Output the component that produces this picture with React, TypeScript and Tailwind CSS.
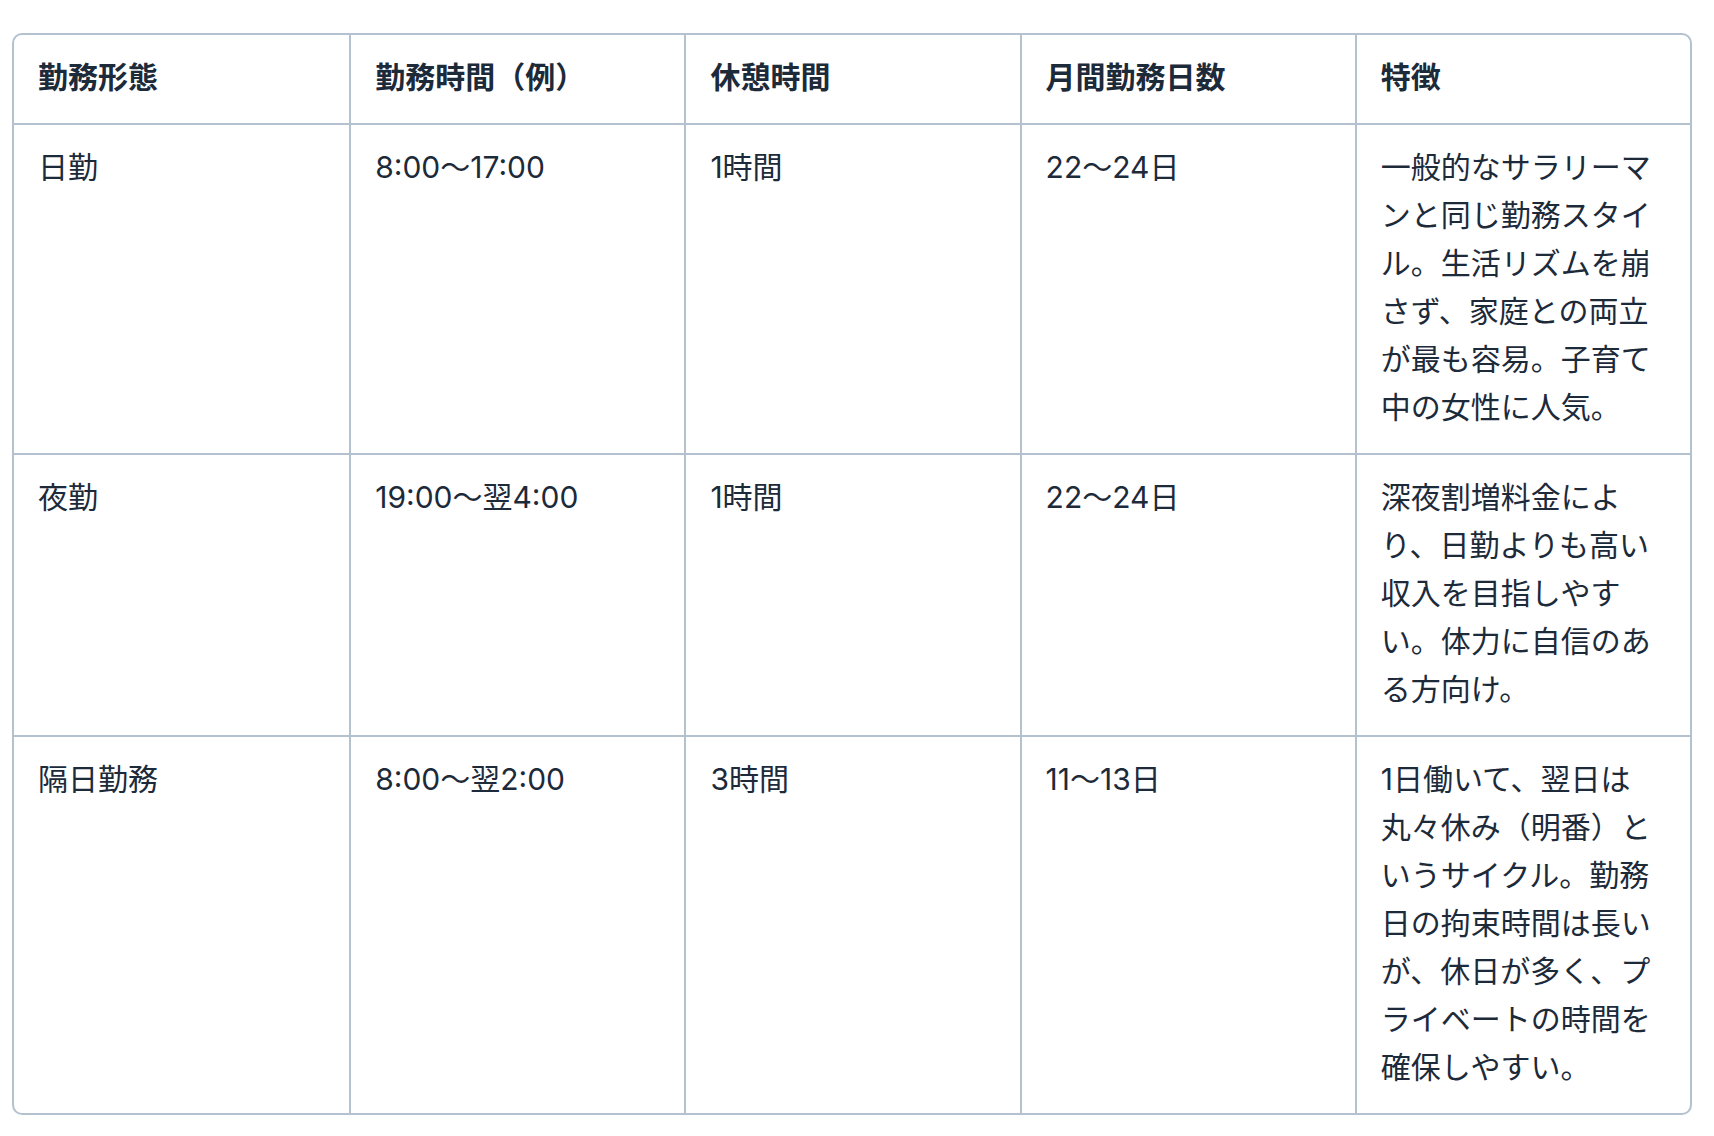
import React from "react";

const headers = ["勤務形態", "勤務時間（例）", "休憩時間", "月間勤務日数", "特徴"];

const rows: string[][] = [
  [
    "日勤",
    "8:00〜17:00",
    "1時間",
    "22〜24日",
    "一般的なサラリーマンと同じ勤務スタイル。生活リズムを崩さず、家庭との両立が最も容易。子育て中の女性に人気。",
  ],
  [
    "夜勤",
    "19:00〜翌4:00",
    "1時間",
    "22〜24日",
    "深夜割増料金により、日勤よりも高い収入を目指しやすい。体力に自信のある方向け。",
  ],
  [
    "隔日勤務",
    "8:00〜翌2:00",
    "3時間",
    "11〜13日",
    "1日働いて、翌日は丸々休み（明番）というサイクル。勤務日の拘束時間は長いが、休日が多く、プライベートの時間を確保しやすい。",
  ],
];

const font = { fontFamily: 'Inter, "Noto Sans CJK JP", sans-serif' };

export default function App() {
  return (
    <div className="min-h-screen bg-white pt-[33px] pl-[12px]" style={font}>
      <div className="w-[1680px] overflow-hidden rounded-[10px] border-2 border-[#b3c2ce] text-[#1c2a3a]">
        <div className="grid grid-cols-5">
          {headers.map((h, i) => (
            <div
              key={h}
              className={`pt-[18px] pb-[22px] pl-6 pr-8 text-[30px] leading-[48px] font-semibold ${
                i > 0 ? "border-l-2 border-[#b3c2ce]" : ""
              }`}
            >
              {h}
            </div>
          ))}
        </div>
        {rows.map((r, ri) => (
          <div key={ri} className="grid grid-cols-5 border-t-2 border-[#b3c2ce]">
            {r.map((c, ci) => (
              <div
                key={ci}
                className={`pt-[18px] pb-[22px] pl-6 pr-8 text-[30px] leading-[48px] ${
                  ci > 0 ? "border-l-2 border-[#b3c2ce]" : ""
                }`}
              >
                {c}
              </div>
            ))}
          </div>
        ))}
      </div>
    </div>
  );
}
